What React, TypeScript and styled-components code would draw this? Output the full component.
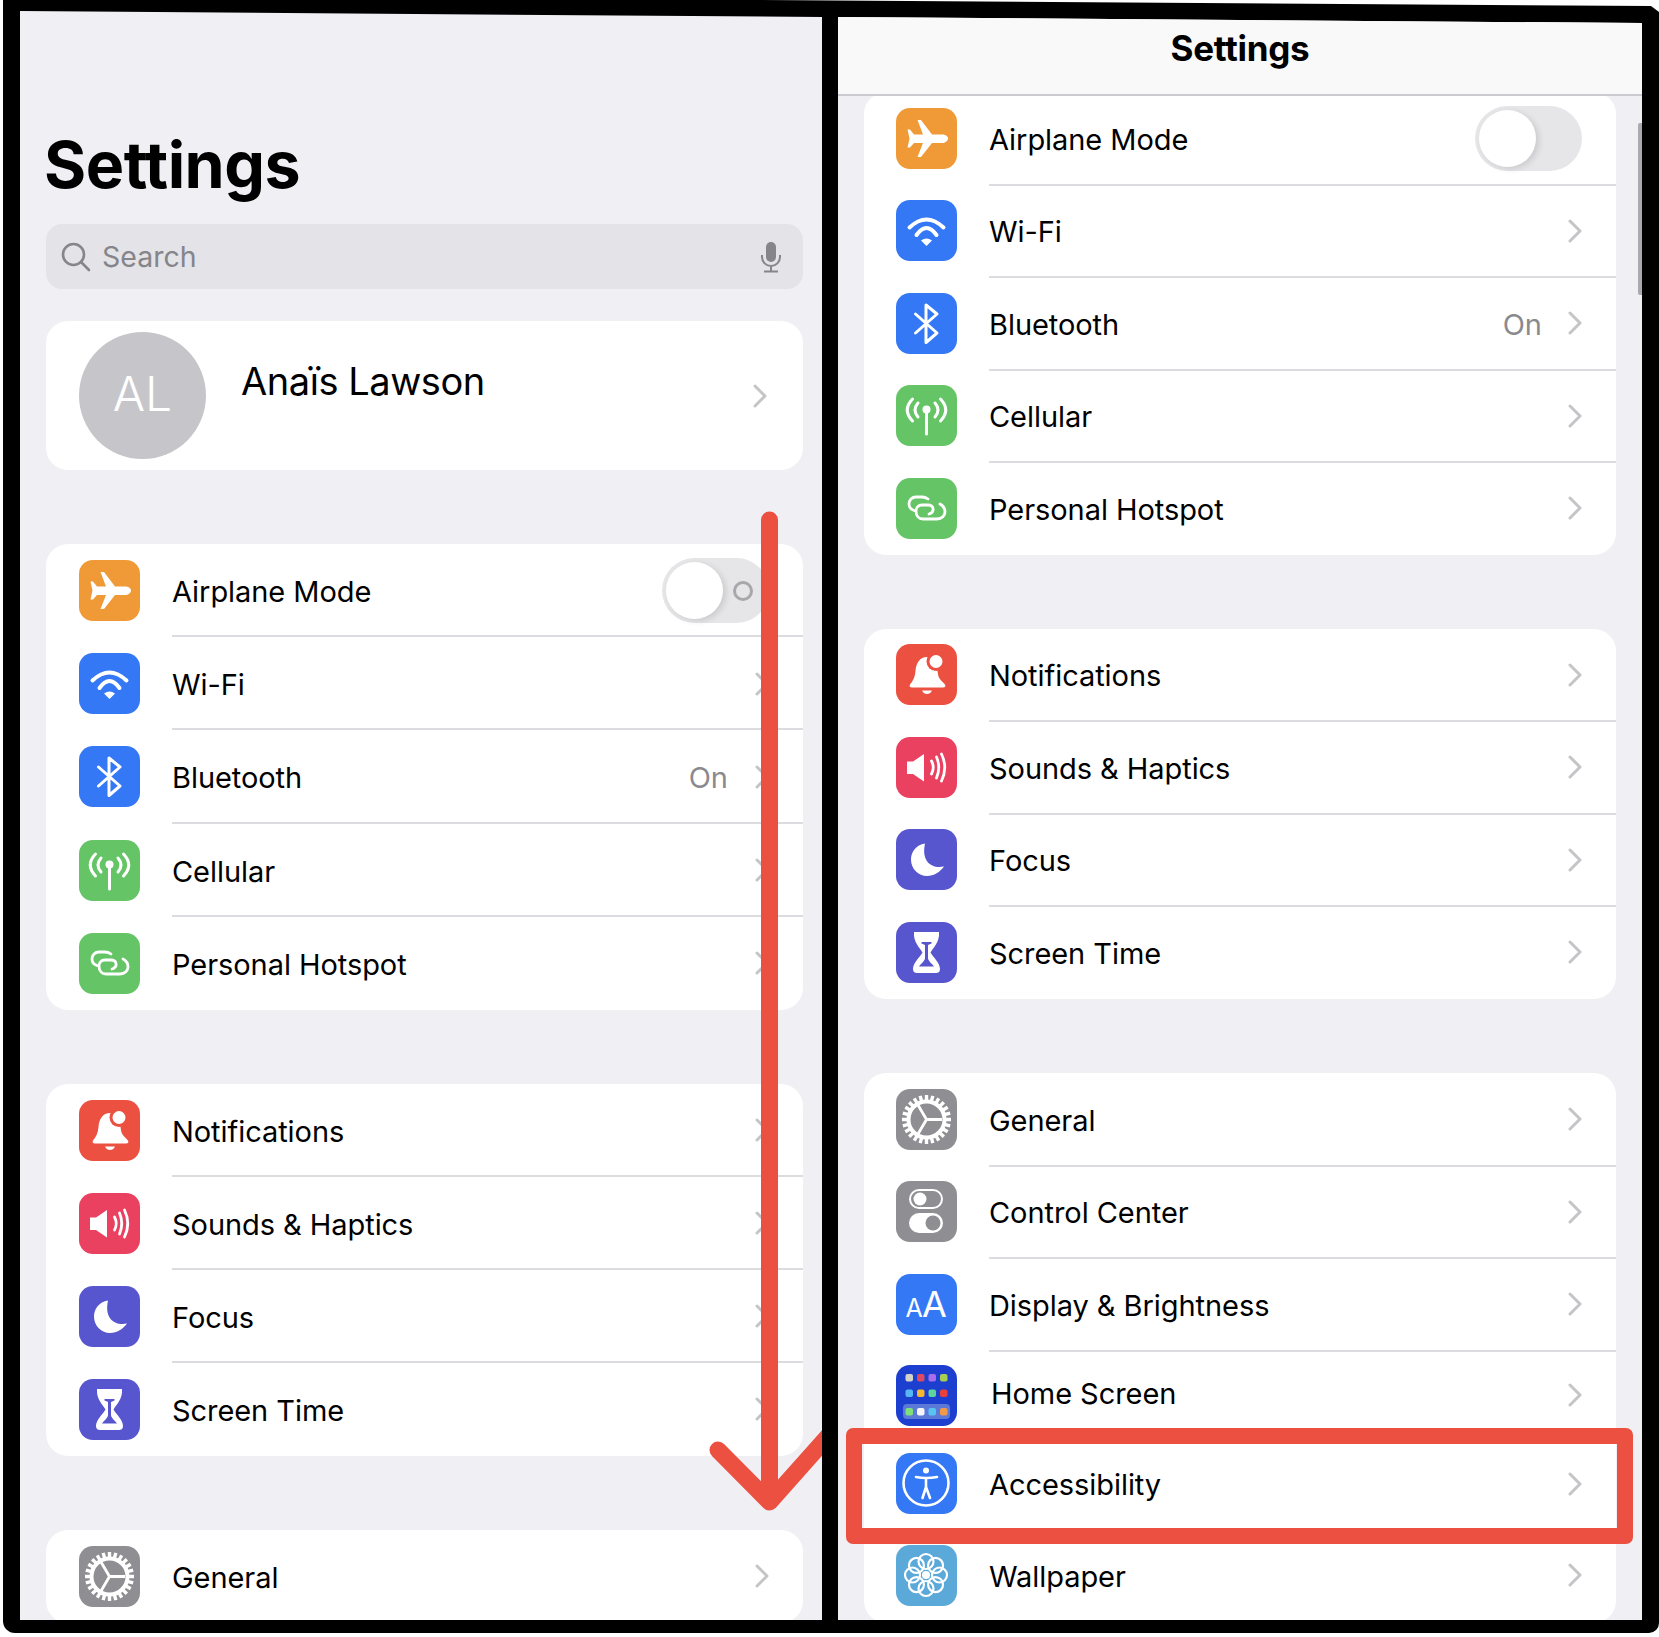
import React from 'react';
import styled, { createGlobalStyle } from 'styled-components';

const GlobalStyle = createGlobalStyle`
  html, body {
    margin: 0;
    padding: 0;
    background: #fff;
  }
  body {
    font-family: Inter, "Liberation Sans", sans-serif;
    -webkit-font-smoothing: antialiased;
  }
`;

const Frame = styled.div`
  position: relative;
  box-sizing: border-box;
  width: 1656px;
  height: 1633px;
  margin-left: 3px;
  padding: 11px 16px 13px 17px;
  background: #000;
  border-radius: 0 0 10px 12px;
  display: grid;
  grid-template-columns: 802px 804px;
  column-gap: 16px;
  overflow: hidden;
  clip-path: polygon(0 0, 45% 0, calc(100% - 8px) 6px, 100% 12px, 100% 100%, 0 100%);
`;

const Panel = styled.div<{ $tiltFrom: number }>`
  position: relative;
  background: #efeff4;
  overflow: hidden;
  display: flex;
  flex-direction: column;
  clip-path: polygon(
    0 ${p => p.$tiltFrom}px,
    100% ${p => p.$tiltFrom + 6}px,
    100% 100%,
    0 100%
  );
`;

const LeftColumn = styled.div`
  padding: 0 19px 0 26px;
`;

const RightColumn = styled.div`
  padding: 0 26px;
`;

const LargeTitle = styled.h1`
  margin: 117px 0 0 -2px;
  font-size: 64.5px;
  line-height: 74px;
  font-weight: 700;
  letter-spacing: -0.5px;
  color: #000;
`;

const SearchBar = styled.div`
  margin-top: 22px;
  height: 65px;
  box-sizing: border-box;
  padding: 0 21px 0 15px;
  display: flex;
  align-items: center;
  gap: 11px;
  background: #e3e3e8;
  border-radius: 16px;
  color: #85858a;
  font-size: 28.5px;
`;

const SearchLabel = styled.span`
  flex: 1;
`;

const ProfileCard = styled.div`
  margin-top: 32px;
  height: 149px;
  background: #fff;
  border-radius: 22px;
  display: flex;
  align-items: center;
  padding: 0 36px 0 33px;
`;

const Avatar = styled.div`
  width: 127px;
  height: 127px;
  box-sizing: border-box;
  padding-bottom: 4px;
  border-radius: 50%;
  background: #c6c6ca;
  color: #fff;
  font-size: 48px;
  font-weight: 300;
  display: flex;
  align-items: center;
  justify-content: center;
  flex: none;
`;

const ProfileName = styled.div`
  flex: 1;
  margin: 0 0 30px 35px;
  font-size: 38px;
  color: #000;
  letter-spacing: -0.45px;
`;

const Card = styled.div<{ $top: number }>`
  margin-top: ${p => p.$top}px;
  background: #fff;
  border-radius: 22px;
  overflow: hidden;
`;

const Row = styled.div<{ $height: number; $inset: number; $drop: number; $plain?: boolean }>`
  position: relative;
  height: ${p => p.$height}px;
  display: flex;
  align-items: center;
  padding: 0 ${p => p.$inset + 2}px 0 ${p => p.$inset}px;
  gap: ${p => p.$inset}px;

  &:not(:last-child)::after {
    content: '';
    display: ${p => (p.$plain ? 'none' : 'block')};
    position: absolute;
    left: ${p => p.$inset * 2 + 61}px;
    right: 0;
    bottom: ${p => -p.$drop}px;
    height: 2px;
    background: #dcdce0;
  }
`;

const IconTile = styled.div<{ $color: string }>`
  width: 61px;
  height: 61px;
  flex: none;
  border-radius: 14px;
  background: ${p => p.$color};
  overflow: hidden;

  svg {
    display: block;
  }
`;

const RowLabel = styled.div<{ $nudge?: number; $lift?: number }>`
  flex: 1;
  margin-left: ${p => p.$nudge ?? 0}px;
  margin-bottom: ${p => p.$lift ?? 0}px;
  padding-top: 2px;
  font-size: 29px;
  letter-spacing: -0.06px;
  color: #000;
`;

const RowValue = styled.div`
  padding-top: 2px;
  margin-right: -6px;
  font-size: 29px;
  color: #8a8a8e;
`;

const Toggle = styled.div`
  position: relative;
  box-sizing: border-box;
  width: 107px;
  height: 65px;
  border-radius: 33px;
  background: #e6e6e9;
  flex: none;
`;

const ToggleKnob = styled.div`
  position: absolute;
  left: 4px;
  top: 4px;
  width: 57px;
  height: 57px;
  border-radius: 50%;
  background: #fff;
  box-shadow: 3px 2px 6px rgba(0, 0, 0, 0.12);
`;

const ToggleOff = styled.div`
  position: absolute;
  left: 71px;
  top: 23px;
  width: 20px;
  height: 20px;
  box-sizing: border-box;
  border: 3px solid #a8a8ac;
  border-radius: 50%;
`;

const NavBar = styled.div`
  position: relative;
  z-index: 1;
  height: 85px;
  flex: none;
  box-sizing: border-box;
  padding-bottom: 10px;
  background: #f9f9fa;
  border-bottom: 2px solid #cbcbcf;
  display: flex;
  align-items: center;
  justify-content: center;
  font-size: 35px;
  font-weight: 700;
  letter-spacing: -0.3px;
  color: #000;
`;

const ScrollThumb = styled.div`
  position: absolute;
  right: 0;
  top: 112px;
  width: 4px;
  height: 172px;
  background: #a9a9af;
  border-radius: 2px 0 0 2px;
`;

const Highlight = styled.div`
  position: absolute;
  z-index: 2;
  left: 8px;
  right: 9px;
  top: 1417px;
  height: 116px;
  box-sizing: border-box;
  border: 16px solid #ec5040;
  border-radius: 7px;
`;

const ArrowOverlay = styled.svg`
  position: absolute;
  left: 677px;
  top: 500px;
`;

const Chevron = () => (
  <svg width="14" height="24" viewBox="0 0 14 24" fill="none" stroke="#c5c5c8" strokeWidth="3">
    <path d="M2 2 L12 12 L2 22" strokeLinecap="round" strokeLinejoin="round" />
  </svg>
);

const W = (props: { children: React.ReactNode }) => (
  <svg width="61" height="61" viewBox="0 0 61 61" fill="none">
    {props.children}
  </svg>
);

const PlaneIcon = () => (
  <W>
    <path
      fill="#fff"
      d="M52 30.5C52 28 49 26.5 46 26.5H36L25 12H21.5L27 26.5H18L14 21.5H11.5L13.5 30.5L11.5 39.5H14L18 35H27L21.5 49H25L36 35H46C49 35 52 33 52 30.5Z"
    />
  </W>
);

const WifiIcon = () => (
  <W>
    <g stroke="#fff" strokeWidth="4" strokeLinecap="round">
      <path d="M13.5 27.5Q30.5 11.5 47.5 27.5" />
      <path d="M20.5 35Q30.5 21 40.5 35" />
    </g>
    <path fill="#fff" d="M25 40.5Q30.5 36.5 36 40.5L30.5 46Z" />
  </W>
);

const BluetoothIcon = () => (
  <W>
    <path
      d="M19.5 21L41 40L30 49.5V12L41 21L19.5 40"
      stroke="#fff"
      strokeWidth="3"
      strokeLinecap="round"
      strokeLinejoin="round"
    />
  </W>
);

const CellularIcon = () => (
  <W>
    <circle cx="30.5" cy="24.5" r="4" fill="#fff" />
    <g stroke="#fff" strokeWidth="3" strokeLinecap="round">
      <path d="M30.5 26V49" />
      <path d="M16.5 14Q6 25 16.5 36" />
      <path d="M22 18Q16 25 22 32" />
      <path d="M44.5 14Q55 25 44.5 36" />
      <path d="M39 18Q45 25 39 32" />
    </g>
  </W>
);

const HotspotIcon = () => (
  <W>
    <g stroke="#fff" strokeWidth="2.8" strokeLinecap="round">
      <path d="M32 21C30 19.5 28 19 26 19H20C16 19 13 22 13 26C13 29 15 31.5 18 32.5" />
      <path d="M33 36C36 35 37.5 33 37 30.5C36.5 28 34 27 32 27H26C22 27 20 30 20 33C20 38 23 41 27 41H41C46 41 49 37.5 49 34C49 30 47 27.5 44 26" />
    </g>
  </W>
);

const BellIcon = () => (
  <W>
    <path
      fill="#fff"
      d="M14 40.5C17 37 19 33 19.5 27C20 19 24 13 31 13C36 13 41 20 42 30C42.5 35 46 37 49 40.5C50 42.5 49 43.5 47 43.5H16C14 43.5 13 42.5 14 40.5Z"
    />
    <path fill="#fff" d="M26 46.5H36C35 49 33 50 31 50C29 50 27 49 26 46.5Z" />
    <circle cx="40" cy="17.5" r="9.5" fill="#eb5040" />
    <circle cx="40" cy="17.5" r="6.5" fill="#fff" />
  </W>
);

const SpeakerIcon = () => (
  <W>
    <path fill="#fff" d="M11 24.5H17L28 17V44.5L17 37H11Z" />
    <g stroke="#fff" strokeWidth="2.8" strokeLinecap="round">
      <path d="M35.5 24Q39 30.5 35.5 37" />
      <path d="M40.5 20Q45 30.5 40.5 41" />
      <path d="M45.5 17Q52 30.5 45.5 44" />
    </g>
  </W>
);

const MoonIcon = () => (
  <W>
    <path
      fill="#fff"
      d="M29 14.5C20 16 15 23 15 30.5C15 40 22.5 47 31 47C38 47 44 43 48 37.5C36 40 25 33 29 14.5Z"
    />
  </W>
);

const HourglassIcon = () => (
  <W>
    <path
      fill="#fff"
      d="M18 10H43C44 20 37 26 34.5 30.5C37 35 44 41 44 47C44 50 42 51 40 51H21C19 51 17 50 17 47C17 41 24 35 26.5 30.5C24 26 17 20 18 10Z"
    />
    <path
      fill="#5856ce"
      d="M25.5 20H35.5V21.5L32 23V36C32 39 37 42.5 38 44.5H23C24 42.5 29 39 29 36V23L25.5 21.5Z"
    />
  </W>
);

const teeth = Array.from({ length: 24 }, (_, i) => (i * 360) / 24);

const GearIcon = () => (
  <W>
    <g stroke="#fff">
      {teeth.map(a => (
        <path key={a} d="M30.5 6V12" strokeWidth="3.4" transform={`rotate(${a} 30.5 30.5)`} />
      ))}
      <circle cx="30.5" cy="30.5" r="18" strokeWidth="4" />
      <path d="M30.5 30.5H46M30.5 30.5L22 16M30.5 30.5L22 45" strokeWidth="2.8" />
    </g>
  </W>
);

const ControlIcon = () => (
  <W>
    <rect x="14" y="9" width="32" height="18" rx="9" stroke="#fff" strokeWidth="2" />
    <circle cx="24" cy="18" r="6.5" fill="#fff" />
    <rect x="13" y="32" width="34" height="20" rx="10" fill="#fff" />
    <circle cx="37" cy="42" r="7.5" fill="#8e8e93" />
  </W>
);

const TileText = styled.text`
  font-family: Inter, sans-serif;
  font-weight: 400;
  fill: #fff;
`;

const DisplayIcon = () => (
  <W>
    <TileText x="9.5" y="43" fontSize="25">A</TileText>
    <TileText x="26" y="43" fontSize="36">A</TileText>
  </W>
);

const homeDots = [
  ['#d3d3c8', '#e04a60', '#a96cec', '#a8d050'],
  ['#57b7f5', '#f5b82e', '#5fd39a', '#e8403a'],
  ['#7fe07a', '#f5f5fa', '#58c4f2', '#f0994a'],
];

const HomeIcon = () => (
  <W>
    <rect x="7" y="39" width="47" height="15" rx="4" fill="#5d79d8" />
    {homeDots.map((row, r) =>
      row.map((c, i) => (
        <rect key={c} x={9.5 + i * 11.5} y={[9, 24.5, 43][r]} width="7.5" height="7.5" rx="2" fill={c} />
      ))
    )}
  </W>
);

const AccessibilityIcon = () => (
  <W>
    <circle cx="30" cy="30" r="22.5" stroke="#fff" strokeWidth="2.6" />
    <circle cx="30" cy="17.5" r="3" fill="#fff" />
    <path
      d="M20 24Q30 26 41 24M30 25V34M30 34L26.5 45M30 34L34 45"
      stroke="#fff"
      strokeWidth="2.6"
      strokeLinecap="round"
    />
  </W>
);

const petals = Array.from({ length: 8 }, (_, i) => i * 45);

const WallpaperIcon = () => (
  <W>
    <g stroke="#fff" strokeWidth="2.2">
      {petals.map(a => (
        <circle key={a} cx="30" cy="16.5" r="7.5" transform={`rotate(${a} 30 30)`} />
      ))}
    </g>
    <circle cx="30" cy="30" r="4" fill="#fff" />
  </W>
);

type RowData = {
  label: string;
  color: string;
  icon: React.ReactNode;
  value?: string;
  toggle?: boolean;
  height?: number;
  nudge?: number;
  lift?: number;
  plain?: boolean;
};

const connectivity: RowData[] = [
  { label: 'Airplane Mode', color: '#f09a37', icon: <PlaneIcon />, toggle: true },
  { label: 'Wi-Fi', color: '#3478f6', icon: <WifiIcon /> },
  { label: 'Bluetooth', color: '#3478f6', icon: <BluetoothIcon />, value: 'On' },
  { label: 'Cellular', color: '#65c466', icon: <CellularIcon /> },
  { label: 'Personal Hotspot', color: '#65c466', icon: <HotspotIcon /> },
];

const alerts: RowData[] = [
  { label: 'Notifications', color: '#eb5040', icon: <BellIcon /> },
  { label: 'Sounds & Haptics', color: '#ea4160', icon: <SpeakerIcon /> },
  { label: 'Focus', color: '#5856ce', icon: <MoonIcon /> },
  { label: 'Screen Time', color: '#5856ce', icon: <HourglassIcon /> },
];

const system: RowData[] = [
  { label: 'General', color: '#8e8e93', icon: <GearIcon /> },
  { label: 'Control Center', color: '#8e8e93', icon: <ControlIcon /> },
  { label: 'Display & Brightness', color: '#3478f6', icon: <DisplayIcon /> },
  { label: 'Home Screen', color: '#1c3fd0', icon: <HomeIcon />, height: 89, nudge: 2, lift: 6, plain: true },
  { label: 'Accessibility', color: '#3478f6', icon: <AccessibilityIcon />, height: 88, lift: 1, plain: true },
  { label: 'Wallpaper', color: '#5aa9d8', icon: <WallpaperIcon />, height: 95 },
];

const SettingsRow = ({
  row,
  inset,
  height,
  drop = 0,
  showOff,
}: {
  row: RowData;
  inset: number;
  height: number;
  drop?: number;
  showOff?: boolean;
}) => (
  <Row $height={row.height ?? height} $inset={inset} $drop={drop} $plain={row.plain}>
    <IconTile $color={row.color}>{row.icon}</IconTile>
    <RowLabel $nudge={row.nudge} $lift={row.lift}>{row.label}</RowLabel>
    {row.value && <RowValue>{row.value}</RowValue>}
    {row.toggle ? (
      <Toggle>
        <ToggleKnob />
        {showOff && <ToggleOff />}
      </Toggle>
    ) : (
      <Chevron />
    )}
  </Row>
);

export default function App() {
  return (
    <>
      <GlobalStyle />
      <Frame>
        <Panel $tiltFrom={0}>
          <LeftColumn>
            <LargeTitle>Settings</LargeTitle>
            <SearchBar>
              <svg width="30" height="30" viewBox="0 0 30 30" fill="none" stroke="#85858a" strokeWidth="2.6">
                <circle cx="12.5" cy="12.5" r="10.5" />
                <path d="M20 20L28 28" strokeLinecap="round" />
              </svg>
              <SearchLabel>Search</SearchLabel>
              <svg width="22" height="32" viewBox="0 0 22 32" fill="none" stroke="#85858a" strokeWidth="2">
                <rect x="6" y="1" width="10" height="20" rx="5" fill="#85858a" stroke="none" />
                <path d="M2 14V16A9 9 0 0 0 20 16V14M11 25V30M4 30.5H18" />
              </svg>
            </SearchBar>
            <ProfileCard>
              <Avatar>AL</Avatar>
              <ProfileName>Anaïs Lawson</ProfileName>
              <Chevron />
            </ProfileCard>
            <Card $top={74}>
              {connectivity.map(row => (
                <SettingsRow key={row.label} row={row} inset={32.5} height={93.2} showOff />
              ))}
            </Card>
            <Card $top={74}>
              {alerts.map(row => (
                <SettingsRow key={row.label} row={row} inset={32.5} height={93} />
              ))}
            </Card>
            <Card $top={74}>
              <SettingsRow row={system[0]} inset={32.5} height={93} />
            </Card>
          </LeftColumn>
        </Panel>
        <Panel $tiltFrom={6}>
          <NavBar>Settings</NavBar>
          <RightColumn>
            <Card $top={-4}>
              {connectivity.map(row => (
                <SettingsRow key={row.label} row={row} inset={32} height={92.5} drop={1} />
              ))}
            </Card>
            <Card $top={74}>
              {alerts.map(row => (
                <SettingsRow key={row.label} row={row} inset={32} height={92.5} drop={1} />
              ))}
            </Card>
            <Card $top={74.5}>
              {system.map(row => (
                <SettingsRow key={row.label} row={row} inset={32} height={92.5} drop={1} />
              ))}
            </Card>
          </RightColumn>
          <ScrollThumb />
          <Highlight />
        </Panel>
        <ArrowOverlay width="142" height="1030" viewBox="680 500 142 1030" fill="none">
          <path
            d="M769.5 520V1502M718 1450L769.5 1502L830 1434"
            stroke="#ec5040"
            strokeWidth="17"
            strokeLinecap="round"
            strokeLinejoin="round"
          />
        </ArrowOverlay>
      </Frame>
    </>
  );
}
